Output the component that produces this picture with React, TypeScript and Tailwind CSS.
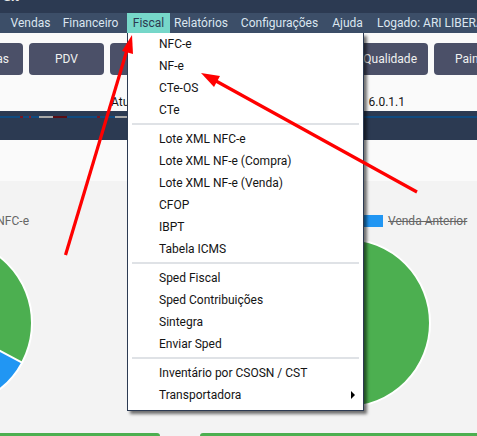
const groups = [
  ["NFC-e", "NF-e", "CTe-OS", "CTe"],
  ["Lote XML NFC-e", "Lote XML NF-e (Compra)", "Lote XML NF-e (Venda)", "CFOP", "IBPT", "Tabela ICMS"],
  ["Sped Fiscal", "Sped Contribuições", "Sintegra", "Enviar Sped"],
  ["Inventário por CSOSN / CST", "Transportadora"],
];

function Menu() {
  return (
    <div className="absolute left-[127px] top-[33px] w-[237px] h-[378px] bg-white border-x border-b border-[#2c3a52] pb-1 shadow-[3px_3px_3px_rgba(0,0,0,0.55)] text-[12px] text-[#141414]">
      {groups.map((g, i) => (
        <div key={i}>
          {i > 0 && (
            <div className="h-[7px] pt-[2px] px-1">
              <div className="h-[2px] bg-[#dfe2e6]" />
            </div>
          )}
          {g.map((t) => (
            <div key={t} className="h-[22px] pl-[31px] pr-2 flex items-center justify-between">
              <span>{t}</span>
              {t === "Transportadora" && (
                <span className="w-0 h-0 border-y-[4px] border-y-transparent border-l-[4px] border-l-black" />
              )}
            </div>
          ))}
        </div>
      ))}
    </div>
  );
}

function Arrows() {
  return (
    <svg className="absolute left-0 top-0 pointer-events-none" width="477" height="436" viewBox="0 0 477 436">
      <line x1="65.5" y1="255" x2="127" y2="50" stroke="#ff0000" strokeWidth="3.2" />
      <polygon points="132,35 133,54 122,51" fill="#ff0000" />
      <line x1="417" y1="192" x2="216" y2="81" stroke="#ff0000" strokeWidth="3.2" />
      <polygon points="201,73 220,76 214,87" fill="#ff0000" />
    </svg>
  );
}

function Btn({ label }: { label?: string }) {
  return (
    <div className="w-[75px] h-[32px] shrink-0 rounded bg-[#4b5068] text-[#f0f0f0] text-[12px] flex items-center justify-center">
      {label}
    </div>
  );
}

export default function App() {
  return (
    <div className="relative w-[477px] h-[436px] overflow-hidden bg-[#f3f3f3] font-['Roboto',sans-serif]">
      <div className="h-[13px] bg-[#2c3a52] overflow-hidden">
        <div className="-mt-[11px] ml-[3px] text-[13px] font-bold text-[#e8e8e8] leading-[15px]">Sit</div>
      </div>
      <div className="h-[20px] bg-[#3c4e68] flex items-center text-[12px] text-[#dbe6f0] whitespace-nowrap overflow-hidden">
        <span className="ml-[12px] w-[37px] shrink-0 flex justify-center">Vendas</span>
        <span className="ml-[14px] w-[55px] shrink-0 flex justify-center">Financeiro</span>
        <span className="ml-[9px] w-[43px] shrink-0 h-full bg-[#76d7c9] text-[#2c3a52] flex items-center justify-center">Fiscal</span>
        <span className="ml-[5px] w-[52px] shrink-0 flex justify-center">Relatórios</span>
        <span className="ml-[14px] w-[77px] shrink-0 flex justify-center">Configurações</span>
        <span className="ml-[14px] w-[31px] shrink-0 flex justify-center">Ajuda</span>
        <span className="ml-[14px] shrink-0">Logado: ARI LIBERATO</span>
      </div>
      <div className="h-[78px] bg-[#fafafa]">
        <div className="pt-[10px] -ml-[52px] flex gap-[6px] w-[600px]">
          <div className="w-[75px] h-[32px] shrink-0 rounded bg-[#4b5068] text-[#f0f0f0] text-[12px] flex items-center justify-end pr-[14px]">Vendas</div>
          <Btn label="PDV" />
          <Btn />
          <Btn />
          <Btn />
          <div className="w-[75px] h-[32px] shrink-0 rounded bg-[#4b5068] text-[#f0f0f0] text-[12px] flex items-center justify-end pr-[11px]">Qualidade</div>
          <div className="w-[75px] h-[32px] shrink-0 rounded bg-[#4b5068] text-[#f0f0f0] text-[12px] flex items-center pl-[21px] whitespace-nowrap">Painel</div>
        </div>
        <div className="mt-[19px] flex justify-between pl-[111px] pr-[72px] text-[12px] leading-[16px] text-[#141414]">
          <span>Atu</span>
          <span>6.0.1.1</span>
        </div>
      </div>
      <div className="h-[29px] bg-[#2c3a52] pt-[5px]">
        <div className="h-[2px] bg-[#0f4a80] flex">
          <div className="ml-[20px] w-[3px] bg-[#7a1420]" />
          <div className="ml-[6px] w-[2px] bg-[#8a1c28]" />
          <div className="ml-[8px] w-[14px] bg-[#a9a9a9]" />
          <div className="w-[14px] bg-[#5a0d14]" />
          <div className="ml-[30px] w-[3px] bg-[#7a1420]" />
          <div className="ml-[15px] w-[12px] bg-[#a9a9a9]" />
        </div>
      </div>
      <div className="h-[41px] bg-[#fafafa]" />
      <div className="-ml-[251px] w-[796px] flex h-[252px]">
        <div className="w-[398px] shrink-0">
          <div className="pt-[34px] pr-[118px] flex justify-end h-[46px] text-[12px] leading-[12px] text-[#666666]">
            <span>NFC-e</span>
          </div>
          <svg className="mt-[10px] mx-auto block" width="172" height="172" viewBox="0 0 172 172">
            <circle cx="86" cy="86" r="84" fill="#4caf50" stroke="#ffffff" strokeWidth="2" />
            <path d="M86 86 L160.1 125.6 A84 84 0 0 1 71.4 168.7 Z" fill="#2196f3" stroke="#ffffff" strokeWidth="2" />
          </svg>
        </div>
        <div className="w-[398px] shrink-0">
          <div className="pt-[34px] pl-[196px] flex items-start gap-[5px] h-[46px] text-[12px] leading-[12px] text-[#666666]">
            <span className="w-[40px] h-[12px] bg-[#2196f3]" />
            <span className="line-through">Venda Anterior</span>
          </div>
          <svg className="mt-[10px] mx-auto block" width="172" height="172" viewBox="0 0 172 172">
            <circle cx="86" cy="86" r="84" fill="#4caf50" stroke="#ffffff" strokeWidth="2" />
          </svg>
        </div>
      </div>
      <div className="flex gap-[40px]">
        <div className="w-[160px] h-[3px] bg-[#4caf50] rounded-tr" />
        <div className="w-[277px] h-[3px] bg-[#4caf50] rounded-tl" />
      </div>
      <Menu />
      <Arrows />
    </div>
  );
}
